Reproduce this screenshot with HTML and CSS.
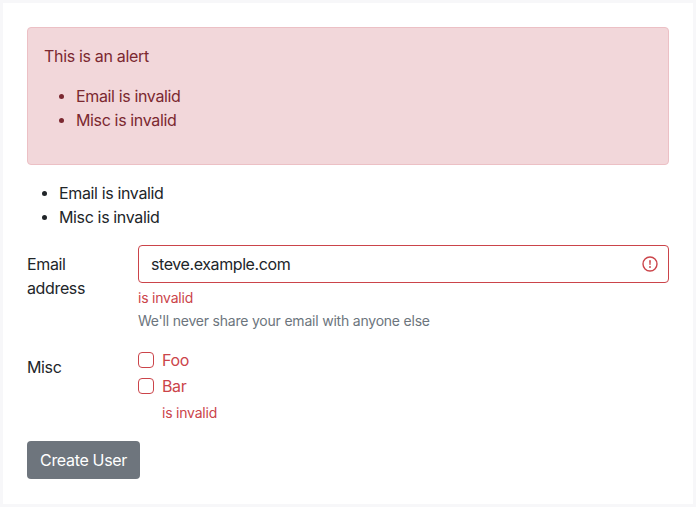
FILE: index.html
```html
<!DOCTYPE html>
<html lang="en">
<head>
<meta charset="utf-8">
<title>Create User</title>
<link rel="stylesheet" href="styles.css">
</head>
<body>
<main class="card">
  <div class="alert">
    <p class="alert-title">This is an alert</p>
    <ul class="errors"><li>Email is invalid</li><li>Misc is invalid</li></ul>
  </div>
  <ul class="errors"><li>Email is invalid</li><li>Misc is invalid</li></ul>
  <form>
    <div class="row row-email">
      <label class="label" for="email">Email address</label>
      <div class="field">
        <div class="control">
          <input id="email" class="input" type="text" value="steve.example.com">
          <svg class="icon" viewBox="0 0 16 16" fill="none" stroke="#cb444a"><circle cx="8" cy="8" r="7" stroke-width="1.4"/><path d="M7.1 4.2h1.8L8.5 9h-1z" fill="#cb444a" stroke="none"/><circle cx="8" cy="11" r=".95" fill="#cb444a" stroke="none"/></svg>
        </div>
        <div class="feedback">is invalid</div>
        <div class="help">We'll never share your email with anyone else</div>
      </div>
    </div>
    <div class="row row-misc">
      <div class="label">Misc</div>
      <div class="field checks">
        <label class="check"><input type="checkbox" class="box"><span>Foo</span></label>
        <label class="check"><input type="checkbox" class="box"><span>Bar</span></label>
        <div class="feedback">is invalid</div>
      </div>
    </div>
    <button class="button" type="button">Create User</button>
  </form>
</main>
</body>
</html>
```
FILE: styles.css
```css
* { box-sizing: border-box; }
body { margin: 0; font: 16px/24px Inter, sans-serif; letter-spacing: -0.36px; color: #212529; background: #fff; }
.card { height: 507px; border: 3px solid #f7f7f9; padding: 24px; }
.alert { height: 138px; padding: 16px; border: 1px solid #ecc0c5; border-radius: 4px; background: #f2d7da; color: #7b2830; margin-bottom: 16px; }
.alert-title { margin: 0 0 16px; letter-spacing: -0.32px; }
.errors { margin: 0 0 16px; padding-left: 32px; list-style: none; }
.errors li { position: relative; }
.errors li::before { content: ""; position: absolute; left: -17px; top: 10px; width: 5.4px; height: 5.4px; border-radius: 50%; background: currentColor; }
.row { display: grid; grid-template-columns: 111px 1fr; }
.row-email { height: 103px; }
.row-misc { height: 93px; }
.label { padding: 7px 24px 0 0; }
.control { position: relative; height: 38px; }
.input { display: block; width: 100%; height: 38px; border: 1px solid #cb444a; border-radius: 4px; padding: 0 12px; font: inherit; letter-spacing: -0.41px; color: #212529; }
.icon { position: absolute; right: 11px; top: 11px; width: 16px; height: 16px; }
.feedback, .help { font-size: 14px; line-height: 21px; margin-top: 4px; letter-spacing: -0.21px; }
.feedback { color: #cb444a; }
.help { color: #6c757d; margin-top: 2px; }
.check { display: flex; gap: 8px; height: 24px; margin-bottom: 2px; color: #cb444a; }
.box { appearance: none; width: 16px; height: 16px; margin: 4px 0 0; border: 1px solid #cb444a; border-radius: 4px; }
.checks .feedback { margin-left: 24px; }
.button { display: block; width: 113px; height: 38px; border: 0; border-radius: 4px; background: #6e757d; color: #fff; font: inherit; letter-spacing: -0.33px; padding: 0; }
```
